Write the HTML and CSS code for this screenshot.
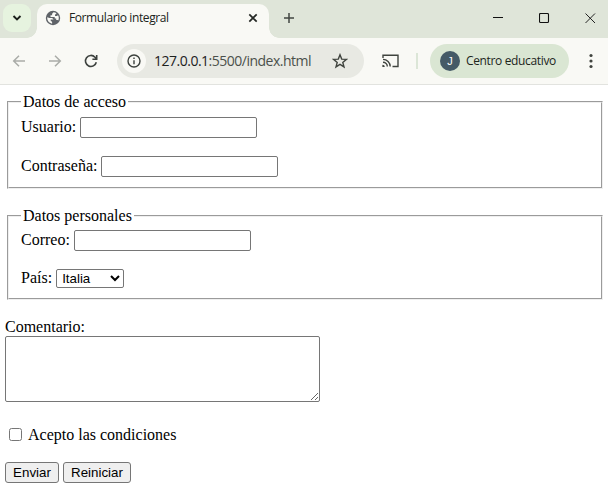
FILE: index.html
```html
<!DOCTYPE html>
<html lang="es">
<head>
<meta charset="utf-8">
<title>Formulario integral</title>
<link rel="stylesheet" href="styles.css">
</head>
<body>
<header class="browser">
  <div class="tabstrip">
    <div class="tab-search"><svg width="10" height="8" viewBox="0 0 10 8"><path d="M1.5 2 5 5.5 8.5 2" fill="none" stroke="#1c201c" stroke-width="1.9"/></svg></div>
    <div class="tab">
      <svg class="globe" width="16" height="16" viewBox="0 0 16 16"><circle cx="8" cy="8" r="7.2" fill="#5f6368"/><path d="M8.5 2.2 7.1 3.7v1.6H5.5v1.6h4.2v1.5h1.5v1.5h1.4l.7.6c.8-1.7.7-3.8-.4-5.4l-.7 1H10V4.7l1.5-1.4C10.600 2.600 9.500 2.200 8.500 2.200zM2.200 7.300c-.2 3 1.800 5.900 4.900 6.400V12l-1.500-1.500V9.400h3L7.200 7.900H4.500z" fill="#f9f9f5"/></svg>
      <span class="tab-title">Formulario integral</span>
      <svg class="tab-close" width="10" height="10" viewBox="0 0 10 10"><path d="M1.300 1.300 8.700 8.700M8.700 1.300 1.300 8.700" stroke="#252825" stroke-width="1.700"/></svg>
    </div>
    <svg class="new-tab" width="12" height="12" viewBox="0 0 12 12"><path d="M6 1v10M1 6h10" stroke="#424642" stroke-width="1.500"/></svg>
    <div class="window-controls">
      <svg width="11" height="11" viewBox="0 0 11 11"><path d="M0 4.500h10" stroke="#111"/></svg>
      <svg width="11" height="11" viewBox="0 0 11 11"><rect x=".5" y=".5" width="9" height="9" rx="1" fill="none" stroke="#111" stroke-width="1.100"/></svg>
      <svg width="11" height="11" viewBox="0 0 11 11"><path d="m.5.5 9.500 9.500m0-9.500L.5 10" stroke="#222"/></svg>
    </div>
  </div>
  <div class="toolbar">
    <svg class="back" width="14" height="14" viewBox="0 0 14 14"><path d="M13 7H2M7 1.700 1.700 7 7 12.300" fill="none" stroke="#aaaca8" stroke-width="1.500"/></svg>
    <svg class="forward" width="14" height="14" viewBox="0 0 14 14"><path d="M1 7h11M7 1.700 12.300 7 7 12.300" fill="none" stroke="#aaaca8" stroke-width="1.500"/></svg>
    <svg class="reload" width="14" height="14" viewBox="0 0 14 14"><path d="M12.300 8.200A5.500 5.500 0 1 1 11 3.200l1.500 1.600M12.700 1v4.300H8.400" fill="none" stroke="#3d423e" stroke-width="1.600"/></svg>
    <div class="omnibox">
      <span class="site-info"><svg width="14" height="14" viewBox="0 0 14 14"><circle cx="7" cy="7" r="6" fill="none" stroke="#3d423e" stroke-width="1.400"/><path d="M7 6.200v4M7 3.600v1.500" stroke="#3d423e" stroke-width="1.400"/></svg></span>
      <span class="url"><b>127.0.0.1</b>:5500/index.html</span>
      <svg class="star" width="16" height="16" viewBox="0 0 16 16"><path d="m8 1.800 1.700 4.300 4.700.3-3.600 3 1.200 4.500L8 11.400l-4 2.500 1.200-4.500-3.600-3 4.700-.3z" fill="none" stroke="#40443f" stroke-width="1.400"/></svg>
    </div>
    <svg class="cast" width="17" height="14" viewBox="0 0 17 14"><path d="M1 4V1.200h15v11.300h-5.500M1 5.400a7.200 7.200 0 0 1 7.200 7.200M1 8.300a4.300 4.300 0 0 1 4.300 4.300" fill="none" stroke="#40443f" stroke-width="1.400"/><path d="M.4 10.700a2.400 2.400 0 0 1 2.400 2.400H.4z" fill="#40443f"/></svg>
    <span class="divider"></span>
    <div class="profile"><span class="avatar">J</span><span class="profile-name">Centro educativo</span></div>
    <svg class="more" width="4" height="16" viewBox="0 0 4 16"><g fill="#40443f"><circle cx="2" cy="2.500" r="1.600"/><circle cx="2" cy="8" r="1.600"/><circle cx="2" cy="13.500" r="1.600"/></g></svg>
  </div>
</header>
<main>
  <form>
    <fieldset class="access">
      <legend>Datos de acceso</legend>
      <div class="row"><label for="usuario">Usuario:</label><input class="field" type="text" id="usuario"></div>
      <div class="row"><label for="clave">Contraseña:</label><input class="field" type="password" id="clave"></div>
    </fieldset>
    <fieldset class="personal">
      <legend>Datos personales</legend>
      <div class="row"><label for="correo">Correo:</label><input class="field" type="email" id="correo"></div>
      <div class="row"><label for="pais">País:</label><select id="pais"><option>Italia</option><option>España</option></select></div>
    </fieldset>
    <label class="comment-label" for="comentario">Comentario:</label>
    <textarea id="comentario"></textarea>
    <div class="terms"><input type="checkbox" id="condiciones"><label for="condiciones">Acepto las condiciones</label></div>
    <div class="actions"><button class="send" type="submit">Enviar</button><button class="reset" type="reset">Reiniciar</button></div>
  </form>
</main>
</body>
</html>
```
FILE: styles.css
```css
* { box-sizing: border-box; }
body { margin: 0; background: #fff; color: #000; font: 16px/18px "Liberation Serif", serif; overflow: hidden; }
svg { display: block; flex: none; }
.browser { font-family: "Open Sans", "Noto Sans", sans-serif; height: 85px; background: #f9f9f5; border-bottom: 1px solid #e2e3df; }
.tabstrip { display: flex; height: 38px; background: #dfe5d9; }
.tab-search { display: grid; place-items: center; width: 28px; height: 28px; margin: 4px 0 0 3px; border-radius: 9px; background: #e6f3df; }
.tab { position: relative; display: flex; align-items: center; width: 232px; height: 34px; margin: 4px 0 0 6px; padding: 0 11px 6px 8px; border-radius: 10px 10px 0 0; background: #f9f9f5; }
.tab::before, .tab::after { content: ""; position: absolute; bottom: 0; width: 10px; height: 10px; }
.tab::before { left: -10px; background: radial-gradient(circle at 0 0, transparent 9.5px, #f9f9f5 10px); }
.tab::after { right: -10px; background: radial-gradient(circle at 100% 0, transparent 9.5px, #f9f9f5 10px); }
.tab-title { margin-left: 8px; font-size: 12px; letter-spacing: -.4px; color: #202420; white-space: nowrap; }
.tab-close { margin-left: auto; }
.new-tab { margin: 12px 0 0 14px; }
.window-controls { display: flex; gap: 35px; margin: 13px 12px 0 auto; }
.toolbar { display: flex; align-items: center; height: 46px; }
.back { margin-left: 12px; }
.forward { margin-left: 22px; }
.reload { margin-left: 22px; }
.omnibox { display: flex; align-items: center; flex: none; width: 247px; height: 34px; margin-left: 19px; padding: 0 16px 0 5px; border-radius: 17px; background: #e8e9e3; }
.site-info { display: grid; place-items: center; flex: none; width: 24px; height: 24px; border-radius: 50%; background: #f9f9f5; }
.url { margin-left: 8px; font-size: 14px; letter-spacing: -.5px; color: #4b504b; white-space: nowrap; }
.url b { font-weight: 400; color: #1d211e; }
.star { margin-left: auto; }
.cast { margin-left: 18px; }
.divider { width: 2px; height: 16px; margin-left: 17px; background: #dce6d7; }
.profile { display: flex; align-items: center; flex: none; width: 139px; height: 34px; margin-left: 12px; padding-left: 10px; border-radius: 17px; background: #dae6d3; }
.avatar { display: grid; place-items: center; width: 20px; height: 20px; border-radius: 50%; background: #455a67; color: #fff; font: 11px/20px "Liberation Sans", sans-serif; }
.profile-name { margin-left: 6px; font-size: 12px; letter-spacing: -.35px; color: #1c251c; white-space: nowrap; }
.more { margin-left: 20px; }

main { padding: 8px 3px 0 5px; }
fieldset { margin: 0 2px; padding: 0 12px; }
legend { height: 18px; padding: 0 2px; }
.access { height: 96px; }
.personal { height: 93px; margin-top: 18px; }
.access .row:first-of-type { margin-top: 6px; }
.personal .row:first-of-type { margin-top: 5px; }
.row { display: flex; align-items: flex-start; height: 21px; gap: 4px; }
.row label { margin-top: 1px; }
.row + .row { margin-top: 18px; }
.field { width: 177px; height: 21px; margin: 0; border: 1px solid #767676; border-radius: 2px; outline: none; }
.personal select { width: 68px; height: 19px; margin: 0; padding: 0 0 0 1px; border: 1px solid #767676; border-radius: 2px; background: #fff; font: 13.333px "Liberation Sans", sans-serif; }
.personal .row + .row label { margin-top: 0; }
.comment-label { display: block; margin-top: 18px; }
textarea { display: block; width: 315px; height: 66px; margin: 0; border: 1px solid #767676; border-radius: 2px; resize: both; }
.terms { display: flex; align-items: center; height: 18px; margin-top: 24px; }
.terms input { width: 13px; height: 13px; margin: -2px 6px 0 4px; }
.actions { display: flex; gap: 4px; margin-top: 18px; }
button { height: 21px; padding: 0; border: 1px solid #767676; border-radius: 3px; background: #efefef; color: #000; font: 13.333px "Liberation Sans", sans-serif; }
.send { width: 54px; }
.reset { width: 68px; }
```
